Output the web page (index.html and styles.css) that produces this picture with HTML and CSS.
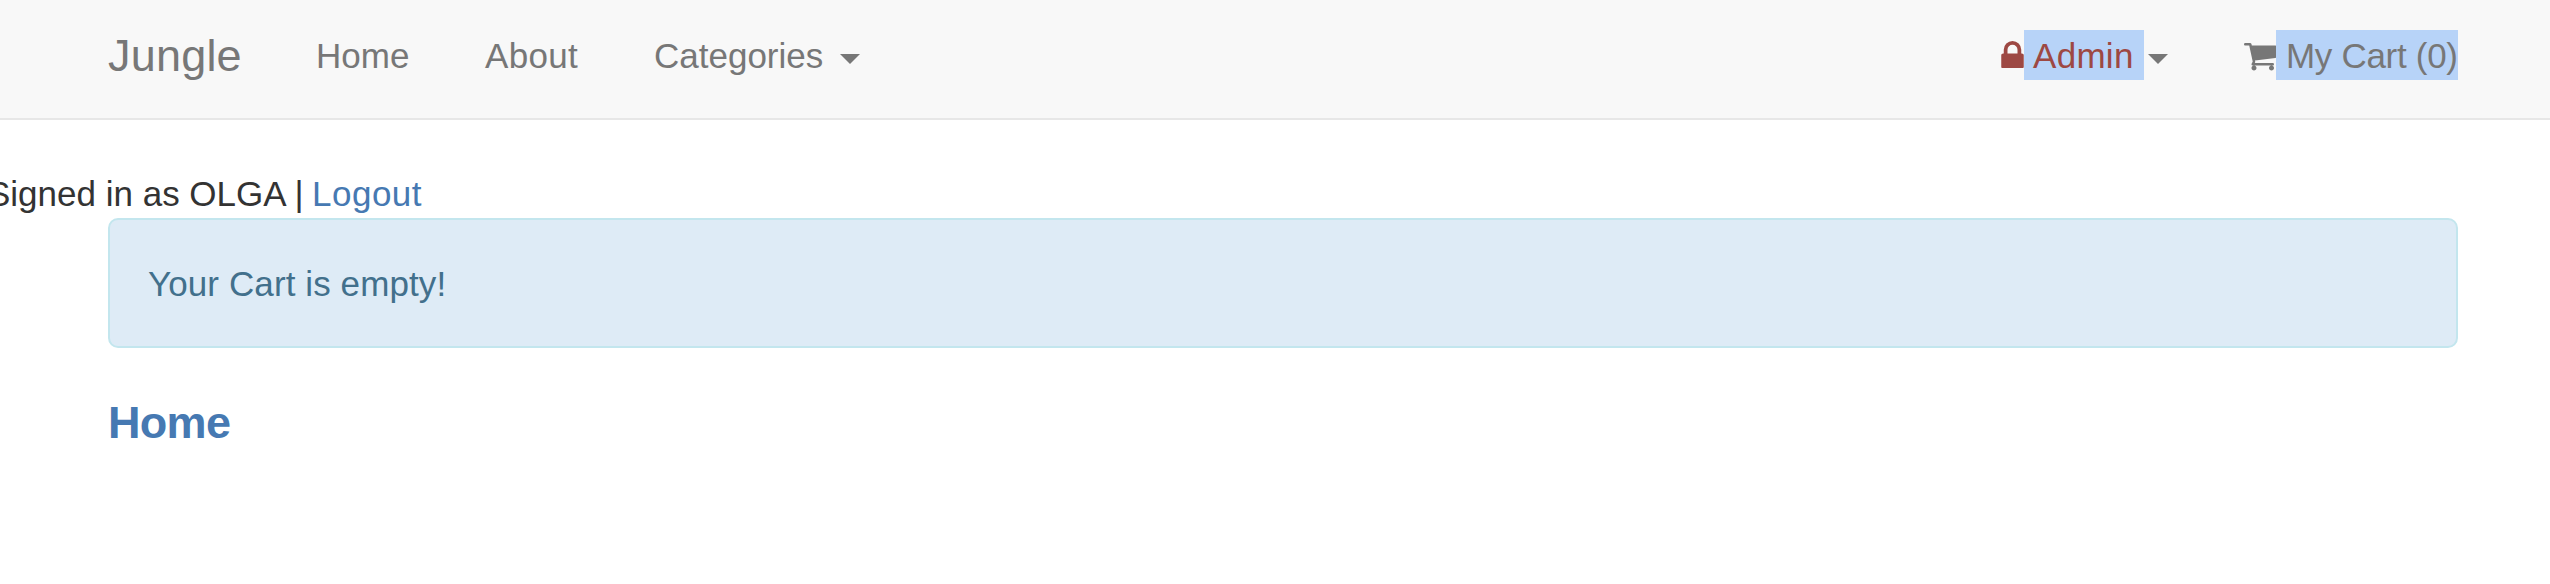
FILE: index.html
```html
<!DOCTYPE html>
<html lang="en">
<head>
<meta charset="utf-8">
<title>Jungle</title>
<link rel="stylesheet" href="styles.css">
</head>
<body>
<nav class="navbar">
  <a class="brand">Jungle</a>
  <a class="nav-link home">Home</a>
  <a class="nav-link about">About</a>
  <a class="nav-link categories">Categories</a>
  <span class="caret"></span>
  <div class="nav-right">
    <a class="nav-link admin"><svg class="icon-lock" viewBox="0 128 1152 1408"><path fill="currentColor" d="M320 768h512v-192q0-106-75-181t-181-75-181 75-75 181v192zm832 96v576q0 40-28 68t-68 28h-960q-40 0-68-28t-28-68v-576q0-40 28-68t68-28h32v-192q0-184 132-316t316-132 316 132 132 316v192h32q40 0 68 28t28 68z"/></svg><span class="selected admin-text">Admin</span></a>
    <span class="caret caret-admin"></span>
    <a class="nav-link cart"><svg class="icon-cart" viewBox="64 256 1664 1408"><path fill="currentColor" d="M704 1536q0 52-38 90t-90 38-90-38-38-90 38-90 90-38 90 38 38 90zm896 0q0 52-38 90t-90 38-90-38-38-90 38-90 90-38 90 38 38 90zm128-1088v512q0 24-16.500 42.500t-40.500 21.500l-1044 122q13 60 13 70 0 16-24 64h920q26 0 45 19t19 45-19 45-45 19h-1024q-26 0-45-19t-19-45q0-11 8-31.500t16-36 21.500-40 15.500-29.500l-177-823h-204q-26 0-45-19t-19-45 19-45 45-19h256q16 0 28.500 6.500t19.500 15.500 13 24.500 8 26 5.500 29.500 4.500 26h1201q26 0 45 19t19 45z"/></svg><span class="selected cart-text">My Cart (0)</span></a>
  </div>
</nav>
<main>
  <div class="session"><span class="who">Signed in as OLGA |</span><a class="logout">Logout</a></div>
  <div class="alert"><span class="alert-text">Your Cart is empty!</span></div>
  <h4 class="heading"><a>Home</a></h4>
</main>
</body>
</html>
```
FILE: styles.css
```css
* { box-sizing: border-box; }
body {
  margin: 0;
  background: #fff;
  color: #333;
  font: 35px/52px "Liberation Sans", Arial, sans-serif;
  overflow: hidden;
  white-space: nowrap;
}
.navbar {
  display: flex;
  align-items: flex-start;
  height: 120px;
  padding: 30px 92px 0 108px;
  background: #f8f8f8;
  border-bottom: 2px solid #e7e7e7;
  color: #777;
}
.brand { font-size: 45px; width: 208px; letter-spacing: 0.2px; }
.home { width: 169px; }
.about { width: 169px; letter-spacing: 0.3px; }
.categories { width: 186px; }
.caret {
  width: 20px;
  height: 10px;
  margin-top: 24px;
  background: #777;
  clip-path: polygon(0 0, 100% 0, 50% 100%);
}
.nav-right { display: flex; margin-left: auto; }
.admin, .cart { display: flex; }
.admin { color: #9d4843; }
.selected { display: block; height: 50px; background: #b7d3f8; }
.admin-text { width: 120px; padding-left: 9px; letter-spacing: 0.3px; }
.icon-lock { width: 23px; height: 27.5px; margin-top: 10.500px; }
.caret-admin { margin-left: 4px; }
.cart { margin-left: 76px; }
.icon-cart { width: 32.500px; height: 27.500px; margin: 13px -0.500px 0 0; }
.cart-text { width: 182px; padding-left: 10px; letter-spacing: -0.3px; }
.session { display: flex; height: 50px; margin: 48px 0 0 -13px; }
.who { width: 325px; }
.logout { color: #4679b2; letter-spacing: 0.5px; }
.alert {
  height: 130px;
  margin: 0 92px 0 108px;
  padding: 38px;
  background: #deebf6;
  border: 2px solid #c3e6ee;
  border-radius: 10px;
  color: #42708c;
}
.alert-text { letter-spacing: 0.1px; }
.heading {
  margin: 49px 0 0 108px;
  font-size: 45px;
  line-height: 52px;
  letter-spacing: -0.7px;
  color: #4679b2;
}
```
